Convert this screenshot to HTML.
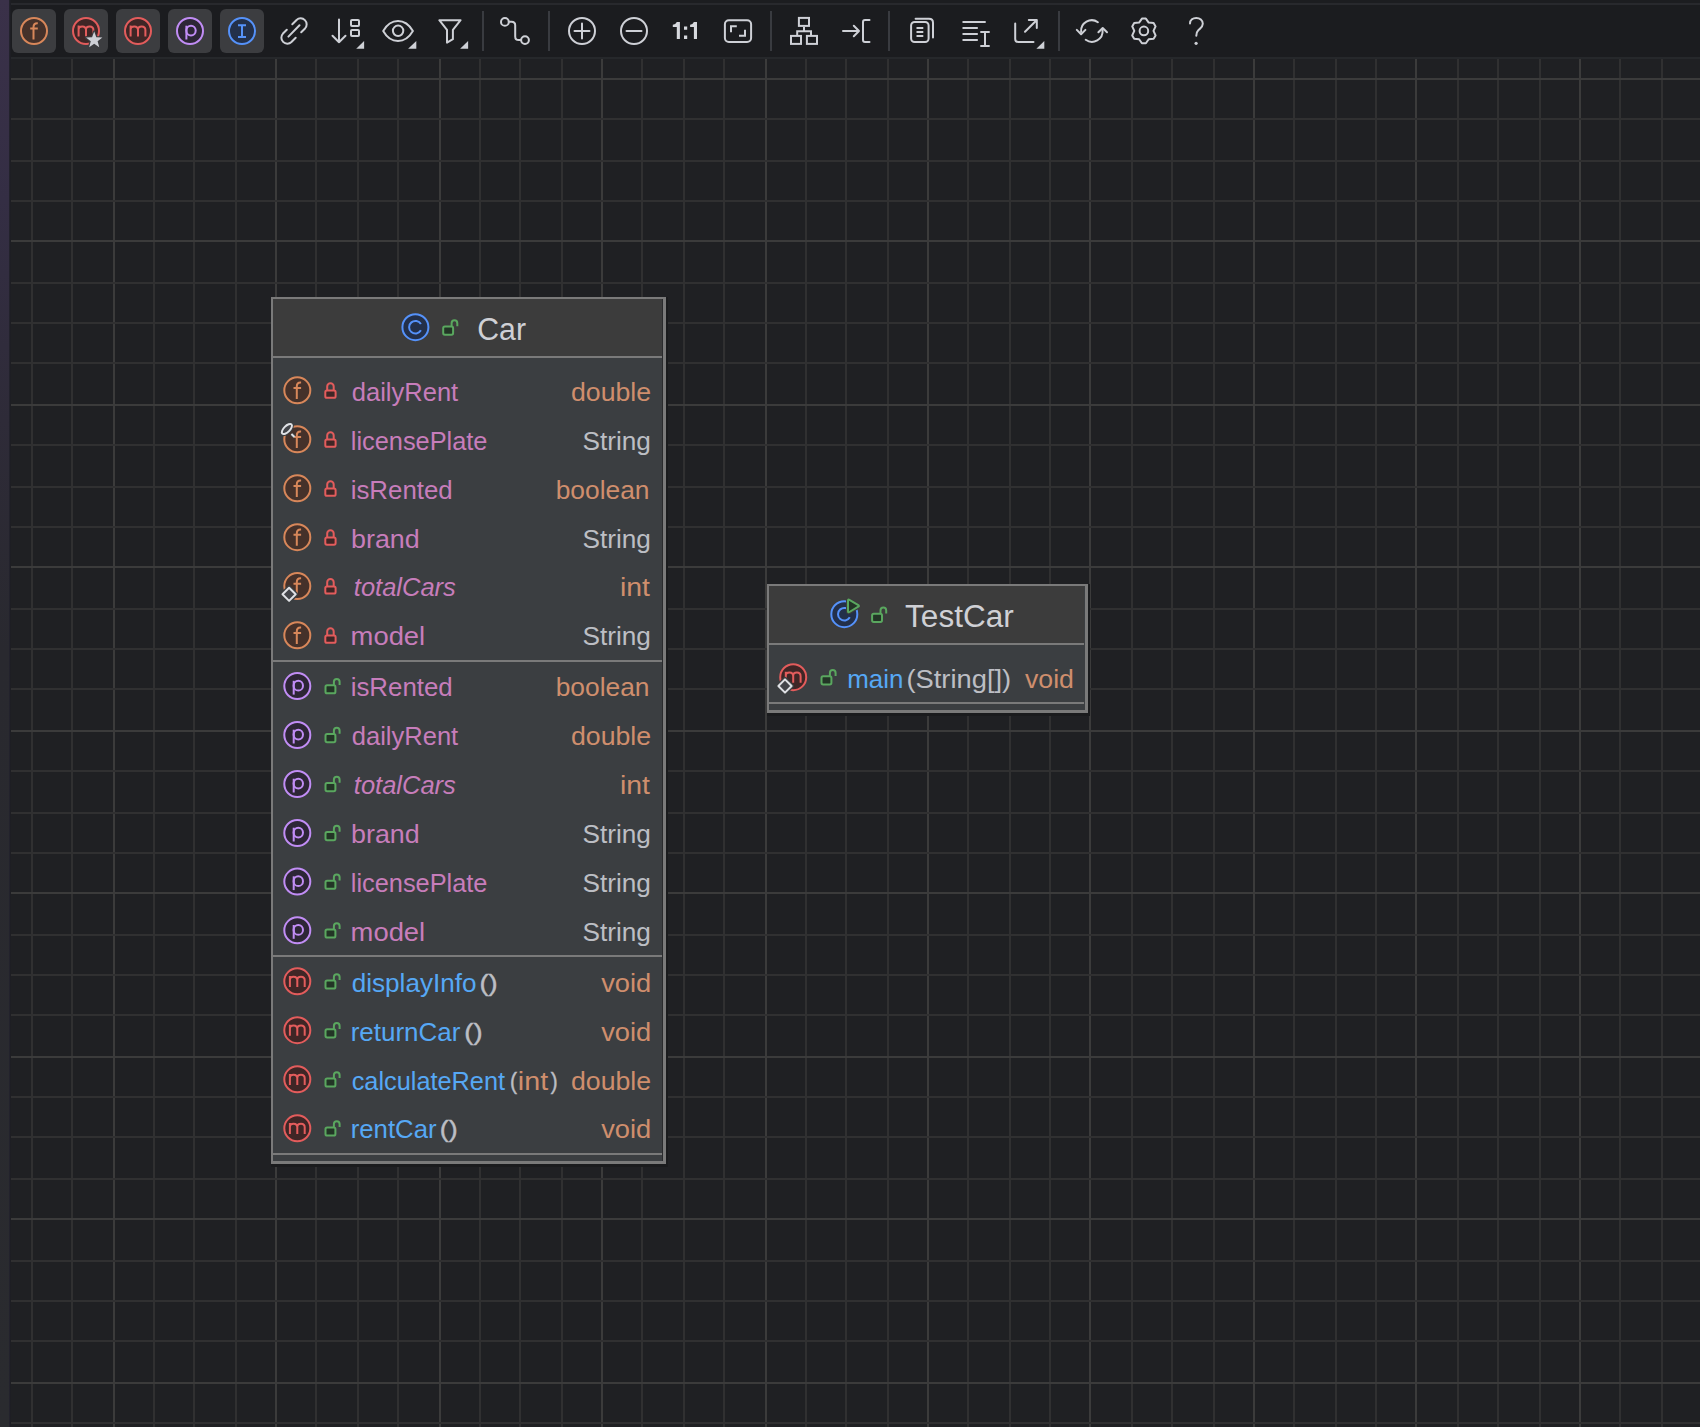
<!DOCTYPE html>
<html><head><meta charset="utf-8"><style>
html,body{margin:0;padding:0}
body{width:1700px;height:1427px;overflow:hidden;position:relative;background:#1f2023;font-family:"Liberation Sans", sans-serif}
.abs{position:absolute}
</style></head><body>

<svg style="position:absolute;left:0;top:0" width="1700" height="1427"><rect x="31" y="59" width="2" height="1368" fill="#303031"/><rect x="71" y="59" width="2" height="1368" fill="#303031"/><rect x="113" y="59" width="2" height="1368" fill="#3b3b3b"/><rect x="153" y="59" width="2" height="1368" fill="#303031"/><rect x="193" y="59" width="2" height="1368" fill="#303031"/><rect x="235" y="59" width="2" height="1368" fill="#303031"/><rect x="275" y="59" width="2" height="1368" fill="#3b3b3b"/><rect x="315" y="59" width="2" height="1368" fill="#303031"/><rect x="357" y="59" width="2" height="1368" fill="#303031"/><rect x="397" y="59" width="2" height="1368" fill="#303031"/><rect x="439" y="59" width="2" height="1368" fill="#3b3b3b"/><rect x="479" y="59" width="2" height="1368" fill="#303031"/><rect x="519" y="59" width="2" height="1368" fill="#303031"/><rect x="561" y="59" width="2" height="1368" fill="#303031"/><rect x="601" y="59" width="2" height="1368" fill="#3b3b3b"/><rect x="641" y="59" width="2" height="1368" fill="#303031"/><rect x="683" y="59" width="2" height="1368" fill="#303031"/><rect x="723" y="59" width="2" height="1368" fill="#303031"/><rect x="765" y="59" width="2" height="1368" fill="#3b3b3b"/><rect x="805" y="59" width="2" height="1368" fill="#303031"/><rect x="845" y="59" width="2" height="1368" fill="#303031"/><rect x="887" y="59" width="2" height="1368" fill="#303031"/><rect x="927" y="59" width="2" height="1368" fill="#3b3b3b"/><rect x="967" y="59" width="2" height="1368" fill="#303031"/><rect x="1009" y="59" width="2" height="1368" fill="#303031"/><rect x="1049" y="59" width="2" height="1368" fill="#303031"/><rect x="1089" y="59" width="2" height="1368" fill="#3b3b3b"/><rect x="1131" y="59" width="2" height="1368" fill="#303031"/><rect x="1171" y="59" width="2" height="1368" fill="#303031"/><rect x="1213" y="59" width="2" height="1368" fill="#303031"/><rect x="1253" y="59" width="2" height="1368" fill="#3b3b3b"/><rect x="1293" y="59" width="2" height="1368" fill="#303031"/><rect x="1335" y="59" width="2" height="1368" fill="#303031"/><rect x="1375" y="59" width="2" height="1368" fill="#303031"/><rect x="1415" y="59" width="2" height="1368" fill="#3b3b3b"/><rect x="1457" y="59" width="2" height="1368" fill="#303031"/><rect x="1497" y="59" width="2" height="1368" fill="#303031"/><rect x="1539" y="59" width="2" height="1368" fill="#303031"/><rect x="1579" y="59" width="2" height="1368" fill="#3b3b3b"/><rect x="1619" y="59" width="2" height="1368" fill="#303031"/><rect x="1661" y="59" width="2" height="1368" fill="#303031"/><rect x="11" y="78" width="1689" height="2" fill="#3b3b3b"/><rect x="11" y="118" width="1689" height="2" fill="#303031"/><rect x="11" y="160" width="1689" height="2" fill="#303031"/><rect x="11" y="200" width="1689" height="2" fill="#303031"/><rect x="11" y="240" width="1689" height="2" fill="#3b3b3b"/><rect x="11" y="282" width="1689" height="2" fill="#303031"/><rect x="11" y="322" width="1689" height="2" fill="#303031"/><rect x="11" y="362" width="1689" height="2" fill="#303031"/><rect x="11" y="404" width="1689" height="2" fill="#3b3b3b"/><rect x="11" y="444" width="1689" height="2" fill="#303031"/><rect x="11" y="486" width="1689" height="2" fill="#303031"/><rect x="11" y="526" width="1689" height="2" fill="#303031"/><rect x="11" y="566" width="1689" height="2" fill="#3b3b3b"/><rect x="11" y="608" width="1689" height="2" fill="#303031"/><rect x="11" y="648" width="1689" height="2" fill="#303031"/><rect x="11" y="688" width="1689" height="2" fill="#303031"/><rect x="11" y="730" width="1689" height="2" fill="#3b3b3b"/><rect x="11" y="770" width="1689" height="2" fill="#303031"/><rect x="11" y="812" width="1689" height="2" fill="#303031"/><rect x="11" y="852" width="1689" height="2" fill="#303031"/><rect x="11" y="892" width="1689" height="2" fill="#3b3b3b"/><rect x="11" y="934" width="1689" height="2" fill="#303031"/><rect x="11" y="974" width="1689" height="2" fill="#303031"/><rect x="11" y="1014" width="1689" height="2" fill="#303031"/><rect x="11" y="1056" width="1689" height="2" fill="#3b3b3b"/><rect x="11" y="1096" width="1689" height="2" fill="#303031"/><rect x="11" y="1136" width="1689" height="2" fill="#303031"/><rect x="11" y="1178" width="1689" height="2" fill="#303031"/><rect x="11" y="1218" width="1689" height="2" fill="#3b3b3b"/><rect x="11" y="1260" width="1689" height="2" fill="#303031"/><rect x="11" y="1300" width="1689" height="2" fill="#303031"/><rect x="11" y="1340" width="1689" height="2" fill="#303031"/><rect x="11" y="1382" width="1689" height="2" fill="#3b3b3b"/><rect x="11" y="1422" width="1689" height="2" fill="#303031"/></svg>
<div class="abs" style="left:0;top:0;width:1700px;height:3px;background:#1c1d20"></div>
<div class="abs" style="left:0;top:3px;width:1700px;height:2px;background:#28292d"></div>
<div class="abs" style="left:0;top:5px;width:1700px;height:52px;background:#1b1c1f"></div>
<div class="abs" style="left:0;top:57px;width:1700px;height:2px;background:#26282b"></div>
<div class="abs" style="left:0;top:0;width:10px;height:1427px;background:linear-gradient(#3a3149 0px,#342e44 200px,#2e2b38 420px,#29292f 650px,#2a2b2f 1427px)"></div>
<div class="abs" style="left:9px;top:0;width:2px;height:1427px;background:linear-gradient(90deg,#252430,#1b1c1f)"></div>
<svg class="abs" style="left:0;top:0" width="1700" height="60"><rect x="12" y="9" width="44" height="44" rx="6" fill="#3c3d40"/><rect x="64" y="9" width="44" height="44" rx="6" fill="#3c3d40"/><rect x="116" y="9" width="44" height="44" rx="6" fill="#3c3d40"/><rect x="168" y="9" width="44" height="44" rx="6" fill="#3c3d40"/><rect x="220" y="9" width="44" height="44" rx="6" fill="#3c3d40"/><circle cx="34" cy="31" r="13" fill="#45312a" stroke="#d8875a" stroke-width="2"/><g transform="translate(18,15) scale(2)" fill="none" stroke="#d8875a" stroke-width="1"><path d="M7.75 12.3V6.1Q7.75 4.1 9.6 4.1H9.9M6.1 6.8H9.9"/></g><g><circle cx="86" cy="31" r="13" fill="#3f2626" stroke="#e35c5c" stroke-width="2"/><g transform="translate(70,15) scale(2)" fill="none" stroke="#e35c5c" stroke-width="1"><path d="M4.3 10.8V5.3M4.3 7.3C4.3 6.1 5.1 5.7 6.15 5.7C7.2 5.7 8 6.2 8 7.5V10.8M8 7.3C8 6.1 8.8 5.7 9.85 5.7C10.9 5.7 11.7 6.2 11.7 7.5V10.8"/></g><path d="M94.20 31.60 L96.32 37.29 L102.38 37.54 L97.62 41.31 L99.25 47.16 L94.20 43.80 L89.15 47.16 L90.78 41.31 L86.02 37.54 L92.08 37.29Z" fill="#ced0d6" stroke="#3c3d40" stroke-width="2.5" stroke-linejoin="round" paint-order="stroke"/></g><circle cx="138" cy="31" r="13" fill="#3f2626" stroke="#e35c5c" stroke-width="2"/><g transform="translate(122,15) scale(2)" fill="none" stroke="#e35c5c" stroke-width="1"><path d="M4.3 10.8V5.3M4.3 7.3C4.3 6.1 5.1 5.7 6.15 5.7C7.2 5.7 8 6.2 8 7.5V10.8M8 7.3C8 6.1 8.8 5.7 9.85 5.7C10.9 5.7 11.7 6.2 11.7 7.5V10.8"/></g><circle cx="190" cy="31" r="13" fill="#2d2636" stroke="#c18df5" stroke-width="2"/><g transform="translate(174,15) scale(2)" fill="none" stroke="#c18df5" stroke-width="1"><path d="M6.2 12.25V5.35"/><ellipse cx="8.5" cy="7.8" rx="2.35" ry="2.45"/></g><circle cx="242" cy="31" r="13" fill="#23304a" stroke="#5592fa" stroke-width="2"/><g transform="translate(226,15) scale(2)" fill="none" stroke="#5592fa" stroke-width="1"><path d="M6 5.15H10M6 10.95H10M8 5.15V10.95"/></g><g fill="none" stroke="#ced0d6" stroke-width="2" stroke-linecap="round" stroke-linejoin="round"><path d="M292.3 24.2L296.56 19.96A6 6 0 0 1 305.04 28.44L301.2 32.3"/><path d="M286.8 29.7L282.96 33.56A6 6 0 0 0 291.44 42.04L295.7 37.8"/><path d="M288.4 36.6L299.5 25.2"/><path d="M339 19.5V42.2M332.5 35.8L339 42.3L345.5 35.8"/><rect x="351" y="20.1" width="8" height="5.8" rx="1"/><rect x="351" y="30.1" width="8" height="6" rx="1"/><path d="M383.2 30.9C387 24.2 392 20.9 398 20.9C404 20.9 409 24.2 412.9 30.9C409 37.6 404 40.9 398 40.9C392 40.9 387 37.6 383.2 30.9Z"/><circle cx="398.1" cy="30.8" r="5.2"/><path d="M439.3 20.2H460.6L452.9 29.8V39.2L447 42.6V29.8Z"/><circle cx="504.9" cy="21.9" r="3.9"/><circle cx="525" cy="40.1" r="3.9"/><path d="M508.8 21.7H511.6Q515.2 21.7 515.2 25.3V36.5Q515.2 40.1 518.8 40.1H521.1"/><circle cx="582" cy="31" r="13"/><path d="M574.5 31H589.5M582 23.5V38.5"/><circle cx="634" cy="31" r="13"/><path d="M626.5 31H641.5"/><rect x="724.9" y="20.2" width="26.2" height="21.8" rx="4"/><path d="M731 32.3V26.3H736.8M739 35.8H745V29.8" stroke-linecap="butt" stroke-linejoin="miter"/><g stroke-linecap="butt" stroke-linejoin="miter"><rect x="798.9" y="17.9" width="10.1" height="8"/><rect x="791" y="35.9" width="10" height="8"/><rect x="806.9" y="35.9" width="10.1" height="8"/><path d="M804 26.9V31.2M797.2 34.9V31.2H811V34.9"/></g><path d="M843 31H859M853.8 25.8L859 31L853.8 36.2"/><path d="M869.5 20H865Q863 20 863 22V40Q863 42 865 42H869.5"/><rect x="911.1" y="21.9" width="17.5" height="20.1" rx="3.5"/><path d="M915.6 18.8H929Q933 18.8 933 22.8V37.5"/><path d="M916.5 28H923.3M916.5 32H923.3M916.5 36H923.3" stroke-linecap="butt"/><path d="M962.5 22.1H985.7M962.5 28H977.8M962.5 34H977.8M962.5 39.9H977.8" stroke-linecap="butt"/><path d="M985 32.5V45.5M980.3 32H989.7M980.3 46H989.7" stroke-linecap="butt"/><path d="M1015.2 23.5V39Q1015.2 42 1018.2 42H1033.5"/><path d="M1025 31.8L1036.8 20M1028.8 20H1036.8V28"/><path d="M1097.9 22.2A10.7 10.7 0 0 0 1081.1 31.8"/><path d="M1076.8 29.9L1081.1 34.2L1085.4 29.9"/><path d="M1085.7 39.8A10.7 10.7 0 0 0 1102.6 30.2"/><path d="M1098.4 32.3L1102.7 28L1107 32.3"/><path d="M1141.94 18.55 L1145.86 18.55 L1148.70 22.59 L1153.61 23.03 L1155.57 26.42 L1153.50 30.90 L1155.57 35.38 L1153.61 38.77 L1148.70 39.21 L1145.86 43.25 L1141.94 43.25 L1139.10 39.21 L1134.19 38.77 L1132.23 35.38 L1134.30 30.90 L1132.23 26.42 L1134.19 23.03 L1139.10 22.59 Z"/><circle cx="1143.9" cy="30.9" r="4.3"/><path d="M1190 23.5C1190 19.8 1193 17.9 1196.3 17.9C1199.8 17.9 1202.8 20.3 1202.8 23.8C1202.8 27.2 1200.2 28.4 1198.3 30.2C1196.8 31.6 1196.3 32.8 1196.3 35.8"/></g><circle cx="1196.1" cy="43.3" r="1.6" fill="#ced0d6"/><path d="M356.2 48.8L364.1 40.9V48.8Z" fill="#ced0d6"/><path d="M408.1 48.8L416.3 40.9V48.8Z" fill="#ced0d6"/><path d="M460.1 48.8L468.1 40.9V48.8Z" fill="#ced0d6"/><path d="M1036.4 48.8L1044.3 40.9V48.8Z" fill="#ced0d6"/><path d="M676.8 22H679.9V38.9H676.8V27H672.8V24.8Q675.5 24.8 676.8 22Z M693.9 22H697V38.9H693.9V27H690.1V24.8Q692.6 24.8 693.9 22Z M684 26.4H687.2V29.8H684Z M684 35.6H687.2V38.9H684Z" fill="#d6d8dd"/><rect x="482" y="11" width="2" height="40" fill="#393b40"/><rect x="548" y="11" width="2" height="40" fill="#393b40"/><rect x="770" y="11" width="2" height="40" fill="#393b40"/><rect x="888" y="11" width="2" height="40" fill="#393b40"/><rect x="1058" y="11" width="2" height="40" fill="#393b40"/></svg>
<div class="abs" style="left:271px;top:297px;width:395px;height:867px;box-shadow:2px 3px 0 #1a1b1d,2px 0 0 #1a1b1d,0 3px 0 #1a1b1d"></div>
<div class="abs" style="left:271px;top:297px;width:390px;height:862px;border-left:2px solid #7a7a7a;border-top:2px solid #7a7a7a;border-right:3px solid #7a7a7a;border-bottom:3px solid #7a7a7a;background:#3b3e41"></div>
<div class="abs" style="left:273px;top:299px;width:389px;height:57px;background:#3c3c3c"></div>
<div class="abs" style="left:662px;top:299px;width:1px;height:862px;background:#2a2b2d"></div>
<div class="abs" style="left:273px;top:356px;width:389px;height:2px;background:#7a7a7a"></div>
<div class="abs" style="left:273px;top:660px;width:389px;height:2px;background:#7a7a7a"></div>
<div class="abs" style="left:273px;top:955px;width:389px;height:2px;background:#7a7a7a"></div>
<div class="abs" style="left:273px;top:1153px;width:389px;height:2px;background:#7a7a7a"></div>
<svg class="abs" style="left:0;top:0" width="1700" height="1427" font-family="Liberation Sans"><circle cx="415.4" cy="327.2" r="13" fill="#23304a" stroke="#5592fa" stroke-width="2"/><g transform="translate(399.4,311.2) scale(2)" fill="none" stroke="#5592fa" stroke-width="1"><path d="M10.75 6.45A3.15 3.15 0 1 0 10.75 9.55"/></g><g transform="translate(431.9,311.5) scale(2)" stroke="#5aa75f" stroke-width="1"><path d="M9.85 7.6V5.85A1.425 1.425 0 0 1 12.7 5.85V7.4" fill="none"/><rect x="5.65" y="7.55" width="4.95" height="4.05" rx="0.8" fill="#233526"/></g><circle cx="297.3" cy="390.3" r="13" fill="#45312a" stroke="#d8875a" stroke-width="2"/><g transform="translate(281.3,374.3) scale(2)" fill="none" stroke="#d8875a" stroke-width="1"><path d="M7.75 12.3V6.1Q7.75 4.1 9.6 4.1H9.9M6.1 6.8H9.9"/></g><g transform="translate(314.2,374.3) scale(2)" stroke="#e35c5c" stroke-width="1"><path d="M6.5 8.2V6.1A1.625 1.625 0 0 1 9.75 6.1V8.2" fill="none"/><rect x="5.55" y="8.15" width="5.15" height="3.6" rx="0.8" fill="#3f2626"/></g><circle cx="297.3" cy="439.3" r="13" fill="#45312a" stroke="#d8875a" stroke-width="2"/><g transform="translate(281.3,423.3) scale(2)" fill="none" stroke="#d8875a" stroke-width="1"><path d="M7.75 12.3V6.1Q7.75 4.1 9.6 4.1H9.9M6.1 6.8H9.9"/></g><g transform="translate(314.2,423.3) scale(2)" stroke="#e35c5c" stroke-width="1"><path d="M6.5 8.2V6.1A1.625 1.625 0 0 1 9.75 6.1V8.2" fill="none"/><rect x="5.55" y="8.15" width="5.15" height="3.6" rx="0.8" fill="#3f2626"/></g><circle cx="297.3" cy="488.3" r="13" fill="#45312a" stroke="#d8875a" stroke-width="2"/><g transform="translate(281.3,472.3) scale(2)" fill="none" stroke="#d8875a" stroke-width="1"><path d="M7.75 12.3V6.1Q7.75 4.1 9.6 4.1H9.9M6.1 6.8H9.9"/></g><g transform="translate(314.2,472.3) scale(2)" stroke="#e35c5c" stroke-width="1"><path d="M6.5 8.2V6.1A1.625 1.625 0 0 1 9.75 6.1V8.2" fill="none"/><rect x="5.55" y="8.15" width="5.15" height="3.6" rx="0.8" fill="#3f2626"/></g><circle cx="297.3" cy="537.2" r="13" fill="#45312a" stroke="#d8875a" stroke-width="2"/><g transform="translate(281.3,521.2) scale(2)" fill="none" stroke="#d8875a" stroke-width="1"><path d="M7.75 12.3V6.1Q7.75 4.1 9.6 4.1H9.9M6.1 6.8H9.9"/></g><g transform="translate(314.2,521.2) scale(2)" stroke="#e35c5c" stroke-width="1"><path d="M6.5 8.2V6.1A1.625 1.625 0 0 1 9.75 6.1V8.2" fill="none"/><rect x="5.55" y="8.15" width="5.15" height="3.6" rx="0.8" fill="#3f2626"/></g><circle cx="297.3" cy="586.1" r="13" fill="#45312a" stroke="#d8875a" stroke-width="2"/><g transform="translate(281.3,570.1) scale(2)" fill="none" stroke="#d8875a" stroke-width="1"><path d="M7.75 12.3V6.1Q7.75 4.1 9.6 4.1H9.9M6.1 6.8H9.9"/></g><g transform="translate(314.2,570.1) scale(2)" stroke="#e35c5c" stroke-width="1"><path d="M6.5 8.2V6.1A1.625 1.625 0 0 1 9.75 6.1V8.2" fill="none"/><rect x="5.55" y="8.15" width="5.15" height="3.6" rx="0.8" fill="#3f2626"/></g><circle cx="297.3" cy="635.3" r="13" fill="#45312a" stroke="#d8875a" stroke-width="2"/><g transform="translate(281.3,619.3) scale(2)" fill="none" stroke="#d8875a" stroke-width="1"><path d="M7.75 12.3V6.1Q7.75 4.1 9.6 4.1H9.9M6.1 6.8H9.9"/></g><g transform="translate(314.2,619.3) scale(2)" stroke="#e35c5c" stroke-width="1"><path d="M6.5 8.2V6.1A1.625 1.625 0 0 1 9.75 6.1V8.2" fill="none"/><rect x="5.55" y="8.15" width="5.15" height="3.6" rx="0.8" fill="#3f2626"/></g><g transform="rotate(-45 286.9 429)"><ellipse cx="286.9" cy="429" rx="6.5" ry="3.0" fill="#43454a" stroke="#3c3f41" stroke-width="4"/><ellipse cx="286.9" cy="429" rx="6.5" ry="3.0" fill="#43454a" stroke="#dfe1e5" stroke-width="2"/></g><path d="M291.4 434.0L294.5 436.9" stroke="#3c3f41" stroke-width="4" stroke-linecap="butt"/><path d="M291.4 434.0L294.5 436.9" stroke="#dfe1e5" stroke-width="2" stroke-linecap="butt"/><path d="M289.1 587.5L295.90000000000003 594.3L289.1 601.0999999999999L282.3 594.3Z" fill="#43454a" stroke="#3c3f41" stroke-width="4.5" stroke-linejoin="round"/><path d="M289.1 587.6999999999999L295.70000000000005 594.3L289.1 600.9L282.5 594.3Z" fill="#43454a" stroke="#dfe1e5" stroke-width="2" stroke-linejoin="round"/><circle cx="297.3" cy="686.1" r="13" fill="#2d2636" stroke="#c18df5" stroke-width="2"/><g transform="translate(281.3,670.1) scale(2)" fill="none" stroke="#c18df5" stroke-width="1"><path d="M6.2 12.25V5.35"/><ellipse cx="8.5" cy="7.8" rx="2.35" ry="2.45"/></g><g transform="translate(314.2,670.1) scale(2)" stroke="#5aa75f" stroke-width="1"><path d="M9.85 7.6V5.85A1.425 1.425 0 0 1 12.7 5.85V7.4" fill="none"/><rect x="5.65" y="7.55" width="4.95" height="4.05" rx="0.8" fill="#233526"/></g><circle cx="297.3" cy="735.0" r="13" fill="#2d2636" stroke="#c18df5" stroke-width="2"/><g transform="translate(281.3,719.0) scale(2)" fill="none" stroke="#c18df5" stroke-width="1"><path d="M6.2 12.25V5.35"/><ellipse cx="8.5" cy="7.8" rx="2.35" ry="2.45"/></g><g transform="translate(314.2,719.0) scale(2)" stroke="#5aa75f" stroke-width="1"><path d="M9.85 7.6V5.85A1.425 1.425 0 0 1 12.7 5.85V7.4" fill="none"/><rect x="5.65" y="7.55" width="4.95" height="4.05" rx="0.8" fill="#233526"/></g><circle cx="297.3" cy="784.0" r="13" fill="#2d2636" stroke="#c18df5" stroke-width="2"/><g transform="translate(281.3,768.0) scale(2)" fill="none" stroke="#c18df5" stroke-width="1"><path d="M6.2 12.25V5.35"/><ellipse cx="8.5" cy="7.8" rx="2.35" ry="2.45"/></g><g transform="translate(314.2,768.0) scale(2)" stroke="#5aa75f" stroke-width="1"><path d="M9.85 7.6V5.85A1.425 1.425 0 0 1 12.7 5.85V7.4" fill="none"/><rect x="5.65" y="7.55" width="4.95" height="4.05" rx="0.8" fill="#233526"/></g><circle cx="297.3" cy="833.0" r="13" fill="#2d2636" stroke="#c18df5" stroke-width="2"/><g transform="translate(281.3,817.0) scale(2)" fill="none" stroke="#c18df5" stroke-width="1"><path d="M6.2 12.25V5.35"/><ellipse cx="8.5" cy="7.8" rx="2.35" ry="2.45"/></g><g transform="translate(314.2,817.0) scale(2)" stroke="#5aa75f" stroke-width="1"><path d="M9.85 7.6V5.85A1.425 1.425 0 0 1 12.7 5.85V7.4" fill="none"/><rect x="5.65" y="7.55" width="4.95" height="4.05" rx="0.8" fill="#233526"/></g><circle cx="297.3" cy="881.6" r="13" fill="#2d2636" stroke="#c18df5" stroke-width="2"/><g transform="translate(281.3,865.6) scale(2)" fill="none" stroke="#c18df5" stroke-width="1"><path d="M6.2 12.25V5.35"/><ellipse cx="8.5" cy="7.8" rx="2.35" ry="2.45"/></g><g transform="translate(314.2,865.6) scale(2)" stroke="#5aa75f" stroke-width="1"><path d="M9.85 7.6V5.85A1.425 1.425 0 0 1 12.7 5.85V7.4" fill="none"/><rect x="5.65" y="7.55" width="4.95" height="4.05" rx="0.8" fill="#233526"/></g><circle cx="297.3" cy="930.3" r="13" fill="#2d2636" stroke="#c18df5" stroke-width="2"/><g transform="translate(281.3,914.3) scale(2)" fill="none" stroke="#c18df5" stroke-width="1"><path d="M6.2 12.25V5.35"/><ellipse cx="8.5" cy="7.8" rx="2.35" ry="2.45"/></g><g transform="translate(314.2,914.3) scale(2)" stroke="#5aa75f" stroke-width="1"><path d="M9.85 7.6V5.85A1.425 1.425 0 0 1 12.7 5.85V7.4" fill="none"/><rect x="5.65" y="7.55" width="4.95" height="4.05" rx="0.8" fill="#233526"/></g><circle cx="297.3" cy="981.3" r="13" fill="#3f2626" stroke="#e35c5c" stroke-width="2"/><g transform="translate(281.3,965.3) scale(2)" fill="none" stroke="#e35c5c" stroke-width="1"><path d="M4.3 10.8V5.3M4.3 7.3C4.3 6.1 5.1 5.7 6.15 5.7C7.2 5.7 8 6.2 8 7.5V10.8M8 7.3C8 6.1 8.8 5.7 9.85 5.7C10.9 5.7 11.7 6.2 11.7 7.5V10.8"/></g><g transform="translate(314.2,965.3) scale(2)" stroke="#5aa75f" stroke-width="1"><path d="M9.85 7.6V5.85A1.425 1.425 0 0 1 12.7 5.85V7.4" fill="none"/><rect x="5.65" y="7.55" width="4.95" height="4.05" rx="0.8" fill="#233526"/></g><circle cx="297.3" cy="1030.2" r="13" fill="#3f2626" stroke="#e35c5c" stroke-width="2"/><g transform="translate(281.3,1014.2) scale(2)" fill="none" stroke="#e35c5c" stroke-width="1"><path d="M4.3 10.8V5.3M4.3 7.3C4.3 6.1 5.1 5.7 6.15 5.7C7.2 5.7 8 6.2 8 7.5V10.8M8 7.3C8 6.1 8.8 5.7 9.85 5.7C10.9 5.7 11.7 6.2 11.7 7.5V10.8"/></g><g transform="translate(314.2,1014.2) scale(2)" stroke="#5aa75f" stroke-width="1"><path d="M9.85 7.6V5.85A1.425 1.425 0 0 1 12.7 5.85V7.4" fill="none"/><rect x="5.65" y="7.55" width="4.95" height="4.05" rx="0.8" fill="#233526"/></g><circle cx="297.3" cy="1079.3" r="13" fill="#3f2626" stroke="#e35c5c" stroke-width="2"/><g transform="translate(281.3,1063.3) scale(2)" fill="none" stroke="#e35c5c" stroke-width="1"><path d="M4.3 10.8V5.3M4.3 7.3C4.3 6.1 5.1 5.7 6.15 5.7C7.2 5.7 8 6.2 8 7.5V10.8M8 7.3C8 6.1 8.8 5.7 9.85 5.7C10.9 5.7 11.7 6.2 11.7 7.5V10.8"/></g><g transform="translate(314.2,1063.3) scale(2)" stroke="#5aa75f" stroke-width="1"><path d="M9.85 7.6V5.85A1.425 1.425 0 0 1 12.7 5.85V7.4" fill="none"/><rect x="5.65" y="7.55" width="4.95" height="4.05" rx="0.8" fill="#233526"/></g><circle cx="297.3" cy="1128.3" r="13" fill="#3f2626" stroke="#e35c5c" stroke-width="2"/><g transform="translate(281.3,1112.3) scale(2)" fill="none" stroke="#e35c5c" stroke-width="1"><path d="M4.3 10.8V5.3M4.3 7.3C4.3 6.1 5.1 5.7 6.15 5.7C7.2 5.7 8 6.2 8 7.5V10.8M8 7.3C8 6.1 8.8 5.7 9.85 5.7C10.9 5.7 11.7 6.2 11.7 7.5V10.8"/></g><g transform="translate(314.2,1112.3) scale(2)" stroke="#5aa75f" stroke-width="1"><path d="M9.85 7.6V5.85A1.425 1.425 0 0 1 12.7 5.85V7.4" fill="none"/><rect x="5.65" y="7.55" width="4.95" height="4.05" rx="0.8" fill="#233526"/></g></svg>
<div class="abs" style="left:767px;top:584px;width:321px;height:129px;box-shadow:2px 3px 0 #1a1b1d,2px 0 0 #1a1b1d,0 3px 0 #1a1b1d"></div>
<div class="abs" style="left:767px;top:584px;width:316px;height:124px;border-left:2px solid #7a7a7a;border-top:2px solid #7a7a7a;border-right:3px solid #7a7a7a;border-bottom:3px solid #7a7a7a;background:#3b3e41"></div>
<div class="abs" style="left:769px;top:586px;width:315px;height:57px;background:#3c3c3c"></div>
<div class="abs" style="left:769px;top:643px;width:315px;height:2px;background:#7a7a7a"></div>
<div class="abs" style="left:769px;top:702px;width:315px;height:2px;background:#7a7a7a"></div>
<svg class="abs" style="left:0;top:0" width="1700" height="1427" font-family="Liberation Sans"><circle cx="844.3" cy="614.2" r="13" fill="#23304a" stroke="#5592fa" stroke-width="2"/><g transform="translate(828.3,598.2) scale(2)" fill="none" stroke="#5592fa" stroke-width="1"><path d="M10.75 6.45A3.15 3.15 0 1 0 10.75 9.55"/></g><path d="M848 600.6Q848 599 849.4 599.8L858.3 605.1Q859.5 605.9 858.3 606.7L849.4 612Q848 612.8 848 611.2Z" fill="#233526" stroke="#3c3c3c" stroke-width="4" stroke-linejoin="round"/><path d="M848 600.6Q848 599 849.4 599.8L858.3 605.1Q859.5 605.9 858.3 606.7L849.4 612Q848 612.8 848 611.2Z" fill="#233526" stroke="#5aa75f" stroke-width="2" stroke-linejoin="round"/><g transform="translate(860.8,598.7) scale(2)" stroke="#5aa75f" stroke-width="1"><path d="M9.85 7.6V5.85A1.425 1.425 0 0 1 12.7 5.85V7.4" fill="none"/><rect x="5.65" y="7.55" width="4.95" height="4.05" rx="0.8" fill="#233526"/></g><circle cx="793.2" cy="677.2" r="13" fill="#3f2626" stroke="#e35c5c" stroke-width="2"/><g transform="translate(777.2,661.2) scale(2)" fill="none" stroke="#e35c5c" stroke-width="1"><path d="M4.3 10.8V5.3M4.3 7.3C4.3 6.1 5.1 5.7 6.15 5.7C7.2 5.7 8 6.2 8 7.5V10.8M8 7.3C8 6.1 8.8 5.7 9.85 5.7C10.9 5.7 11.7 6.2 11.7 7.5V10.8"/></g><path d="M785 679.2L791.8 686L785 692.8L778.2 686Z" fill="#43454a" stroke="#3c3f41" stroke-width="4.5" stroke-linejoin="round"/><path d="M785 679.4L791.6 686L785 692.6L778.4 686Z" fill="#43454a" stroke="#dfe1e5" stroke-width="2" stroke-linejoin="round"/><g transform="translate(810.2,661.2) scale(2)" stroke="#5aa75f" stroke-width="1"><path d="M9.85 7.6V5.85A1.425 1.425 0 0 1 12.7 5.85V7.4" fill="none"/><rect x="5.65" y="7.55" width="4.95" height="4.05" rx="0.8" fill="#233526"/></g></svg>
<svg class="abs" style="left:0;top:0" width="1700" height="1427" font-family="Liberation Sans"><text x="477.22" y="340.0" font-size="31" fill="#cfd0d5" textLength="48.73" lengthAdjust="spacingAndGlyphs">Car</text><text x="905.08" y="627.1" font-size="31" fill="#cfd0d5" textLength="108.63" lengthAdjust="spacingAndGlyphs">TestCar</text><text x="351.72" y="401" font-size="26" fill="#c77dbb" textLength="106.5" lengthAdjust="spacingAndGlyphs">dailyRent</text><text x="570.97" y="401" font-size="26" fill="#cf8e6d" textLength="80.13" lengthAdjust="spacingAndGlyphs">double</text><text x="350.75" y="450" font-size="26" fill="#c77dbb" textLength="136.72" lengthAdjust="spacingAndGlyphs">licensePlate</text><text x="582.49" y="450" font-size="26" fill="#bcbec4" textLength="68.44" lengthAdjust="spacingAndGlyphs">String</text><text x="350.71" y="499" font-size="26" fill="#c77dbb" textLength="102.0" lengthAdjust="spacingAndGlyphs">isRented</text><text x="555.67" y="499" font-size="26" fill="#cf8e6d" textLength="93.9" lengthAdjust="spacingAndGlyphs">boolean</text><text x="351.03" y="548" font-size="26" fill="#c77dbb" textLength="68.72" lengthAdjust="spacingAndGlyphs">brand</text><text x="582.49" y="548" font-size="26" fill="#bcbec4" textLength="68.44" lengthAdjust="spacingAndGlyphs">String</text><text x="353.82" y="596" font-size="26" font-style="italic" fill="#c77dbb" textLength="102.03" lengthAdjust="spacingAndGlyphs">totalCars</text><text x="620.02" y="596" font-size="26" fill="#cf8e6d" textLength="30.0" lengthAdjust="spacingAndGlyphs">int</text><text x="350.59" y="645" font-size="26" fill="#c77dbb" textLength="74.63" lengthAdjust="spacingAndGlyphs">model</text><text x="582.49" y="645" font-size="26" fill="#bcbec4" textLength="68.44" lengthAdjust="spacingAndGlyphs">String</text><text x="350.71" y="696" font-size="26" fill="#c77dbb" textLength="102.0" lengthAdjust="spacingAndGlyphs">isRented</text><text x="555.67" y="696" font-size="26" fill="#cf8e6d" textLength="93.9" lengthAdjust="spacingAndGlyphs">boolean</text><text x="351.72" y="745" font-size="26" fill="#c77dbb" textLength="106.5" lengthAdjust="spacingAndGlyphs">dailyRent</text><text x="570.97" y="745" font-size="26" fill="#cf8e6d" textLength="80.13" lengthAdjust="spacingAndGlyphs">double</text><text x="353.82" y="794" font-size="26" font-style="italic" fill="#c77dbb" textLength="102.03" lengthAdjust="spacingAndGlyphs">totalCars</text><text x="620.02" y="794" font-size="26" fill="#cf8e6d" textLength="30.0" lengthAdjust="spacingAndGlyphs">int</text><text x="351.03" y="843" font-size="26" fill="#c77dbb" textLength="68.72" lengthAdjust="spacingAndGlyphs">brand</text><text x="582.49" y="843" font-size="26" fill="#bcbec4" textLength="68.44" lengthAdjust="spacingAndGlyphs">String</text><text x="350.75" y="892" font-size="26" fill="#c77dbb" textLength="136.72" lengthAdjust="spacingAndGlyphs">licensePlate</text><text x="582.49" y="892" font-size="26" fill="#bcbec4" textLength="68.44" lengthAdjust="spacingAndGlyphs">String</text><text x="350.59" y="941" font-size="26" fill="#c77dbb" textLength="74.63" lengthAdjust="spacingAndGlyphs">model</text><text x="582.49" y="941" font-size="26" fill="#bcbec4" textLength="68.44" lengthAdjust="spacingAndGlyphs">String</text><text x="351.7" y="992" font-size="26" fill="#56a8f5" textLength="124.82" lengthAdjust="spacingAndGlyphs">displayInfo</text><text x="479.49" y="991.2" font-size="24.5" stroke="#bcbec4" stroke-width="0.45" fill="#bcbec4" textLength="18.19" lengthAdjust="spacingAndGlyphs">()</text><text x="601.2" y="992" font-size="26" fill="#cf8e6d" textLength="50.09" lengthAdjust="spacingAndGlyphs">void</text><text x="350.7" y="1041" font-size="26" fill="#56a8f5" textLength="109.73" lengthAdjust="spacingAndGlyphs">returnCar</text><text x="464.39" y="1040.2" font-size="24.5" stroke="#bcbec4" stroke-width="0.45" fill="#bcbec4" textLength="18.19" lengthAdjust="spacingAndGlyphs">()</text><text x="601.2" y="1041" font-size="26" fill="#cf8e6d" textLength="50.09" lengthAdjust="spacingAndGlyphs">void</text><text x="351.73" y="1090" font-size="26" fill="#56a8f5" textLength="153.33" lengthAdjust="spacingAndGlyphs">calculateRent</text><text x="509.94" y="1089.2" font-size="24.5" stroke="#bcbec4" stroke-width="0.45" fill="#bcbec4" textLength="7.0" lengthAdjust="spacingAndGlyphs">(</text><text x="517.89" y="1090" font-size="26" fill="#cf8e6d" textLength="30.32" lengthAdjust="spacingAndGlyphs">int</text><text x="550.8" y="1089.2" font-size="24.5" stroke="#bcbec4" stroke-width="0.45" fill="#bcbec4" textLength="6.89" lengthAdjust="spacingAndGlyphs">)</text><text x="570.97" y="1090" font-size="26" fill="#cf8e6d" textLength="80.13" lengthAdjust="spacingAndGlyphs">double</text><text x="350.72" y="1138" font-size="26" fill="#56a8f5" textLength="85.89" lengthAdjust="spacingAndGlyphs">rentCar</text><text x="439.81" y="1137.2" font-size="24.5" stroke="#bcbec4" stroke-width="0.45" fill="#bcbec4" textLength="17.84" lengthAdjust="spacingAndGlyphs">()</text><text x="601.2" y="1138" font-size="26" fill="#cf8e6d" textLength="50.09" lengthAdjust="spacingAndGlyphs">void</text><text x="847.2" y="687.8" font-size="26" fill="#56a8f5" textLength="56.25" lengthAdjust="spacingAndGlyphs">main</text><text x="906.45" y="687.8" font-size="26" fill="#bcbec4" textLength="104.72" lengthAdjust="spacingAndGlyphs">(String[])</text><text x="1025.0" y="687.8" font-size="26" fill="#cf8e6d" textLength="48.95" lengthAdjust="spacingAndGlyphs">void</text></svg>
</body></html>
